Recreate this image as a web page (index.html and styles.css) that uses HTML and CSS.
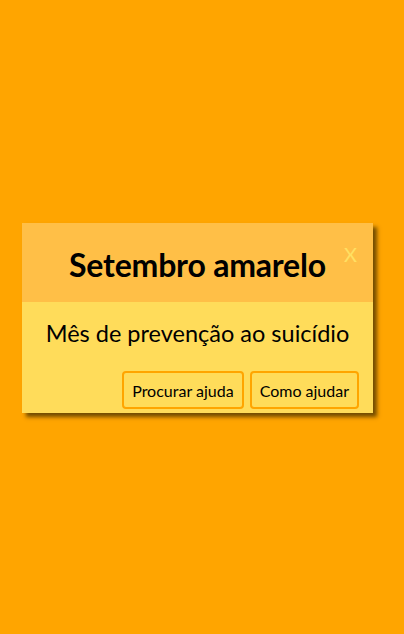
FILE: index.html
```html
<!DOCTYPE html>
<html lang="pt">
<head>
<meta charset="utf-8">
<link rel="stylesheet" href="styles.css">
</head>
<body>
<div class="page">
  <div class="modal">
    <div class="modal-header">
      <h1 class="title">Setembro amarelo</h1>
      <span class="close">X</span>
    </div>
    <div class="modal-body">
      <p class="text">Mês de prevenção ao suicídio</p>
      <div class="actions">
        <button class="btn">Procurar ajuda</button>
        <button class="btn">Como ajudar</button>
      </div>
    </div>
  </div>
</div>
</body>
</html>
```
FILE: styles.css
```css
html, body {
  margin: 0;
  padding: 0;
  height: 100%;
}
body {
  background: #ffa500;
  font-family: Lato, "Liberation Sans", sans-serif;
}
.page {
  padding: 223px 31px 0 22px;
}
.modal {
  width: 351px;
  box-shadow: 4px 4px 4px rgba(90, 60, 0, 0.85);
  position: relative;
}
.modal-header {
  background: #ffbf47;
  height: 79px;
  display: flex;
  align-items: center;
  justify-content: center;
}
.title {
  margin: 0;
  padding-top: 4px;
  font-size: 32px;
  font-weight: 700;
  color: #000;
  letter-spacing: -0.2px;
}
.close {
  position: absolute;
  top: 19px;
  right: 16px;
  color: #ffe063;
  font-size: 20px;
  font-weight: 400;
}
.modal-body {
  background: #ffdc5a;
  padding: 17px 14px 4px 14px;
}
.text {
  margin: 0;
  text-align: center;
  font-size: 23.5px;
  color: #000;
}
.actions {
  display: flex;
  justify-content: flex-end;
  gap: 6px;
  margin-top: 24px;
}
.btn {
  font-family: Lato, "Liberation Sans", sans-serif;
  font-size: 16px;
  color: #000;
  background: #ffdc5a;
  border: 2px solid #ffa500;
  border-radius: 4px;
  height: 38px;
  padding: 0 8px;
}
```
